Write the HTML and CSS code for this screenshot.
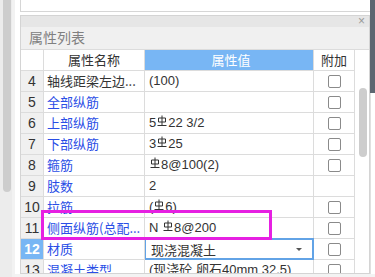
FILE: index.html
```html
<!DOCTYPE html>
<html lang="zh-CN">
<head>
  <meta charset="UTF-8" />
  <title>属性列表</title>
  <link rel="stylesheet" href="styles.css">
</head>
<body>
  <div class="screen">
    <div class="left-strip"><div class="left-thumb"></div></div>

    <div class="main">
      <div class="top-box"></div>

      <div class="panel">
        <div class="title-bar"><span class="close">×</span></div>
        <div class="panel-head">属性列表</div>

        <div class="panel-body">
          <div class="grid">
            <div class="row head">
              <div class="c num"></div>
              <div class="c name center">属性名称</div>
              <div class="c val center hl">属性值</div>
              <div class="c extra center">附加</div>
            </div>
            <div class="row">
              <div class="c num">4</div>
              <div class="c name black">轴线距梁左边...</div>
              <div class="c val">(100)</div>
              <div class="c extra"><span class="box"></span></div>
            </div>
            <div class="row">
              <div class="c num">5</div>
              <div class="c name">全部纵筋</div>
              <div class="c val"></div>
              <div class="c extra"><span class="box"></span></div>
            </div>
            <div class="row">
              <div class="c num">6</div>
              <div class="c name">上部纵筋</div>
              <div class="c val">5<svg class="steel" viewBox="0 0 10 12"><path d="M5 0.5V10M1.5 3H8.5V7H1.5ZM0.5 10.5H9.5"/></svg>22 3/2</div>
              <div class="c extra"><span class="box"></span></div>
            </div>
            <div class="row">
              <div class="c num">7</div>
              <div class="c name">下部纵筋</div>
              <div class="c val">3<svg class="steel" viewBox="0 0 10 12"><path d="M5 0.5V10M1.5 3H8.5V7H1.5ZM0.5 10.5H9.5"/></svg>25</div>
              <div class="c extra"><span class="box"></span></div>
            </div>
            <div class="row">
              <div class="c num">8</div>
              <div class="c name">箍筋</div>
              <div class="c val"><svg class="steel" viewBox="0 0 10 12"><path d="M5 0.5V10M1.5 3H8.5V7H1.5ZM0.5 10.5H9.5"/></svg>8@100(2)</div>
              <div class="c extra"><span class="box"></span></div>
            </div>
            <div class="row">
              <div class="c num">9</div>
              <div class="c name">肢数</div>
              <div class="c val">2</div>
              <div class="c extra"></div>
            </div>
            <div class="row">
              <div class="c num">10</div>
              <div class="c name">拉筋</div>
              <div class="c val">(<svg class="steel" viewBox="0 0 10 12"><path d="M5 0.5V10M1.5 3H8.5V7H1.5ZM0.5 10.5H9.5"/></svg>6)</div>
              <div class="c extra"><span class="box"></span></div>
            </div>
            <div class="row">
              <div class="c num">11</div>
              <div class="c name">侧面纵筋(总配...</div>
              <div class="c val">N <svg class="steel" viewBox="0 0 10 12"><path d="M5 0.5V10M1.5 3H8.5V7H1.5ZM0.5 10.5H9.5"/></svg>8@200</div>
              <div class="c extra"><span class="box"></span></div>
            </div>
            <div class="row">
              <div class="c num sel">12</div>
              <div class="c name">材质</div>
              <div class="c val select"><span>现浇混凝土</span><span class="caret"></span></div>
              <div class="c extra"><span class="box"></span></div>
            </div>
            <div class="row">
              <div class="c num">13</div>
              <div class="c name">混凝土类型</div>
              <div class="c val">(现浇砼 卵石40mm 32.5)</div>
              <div class="c extra"><span class="box"></span></div>
            </div>
          </div>

          <div class="vscroll"><div class="vthumb"></div></div>
        </div>
      </div>
    </div>

    <div class="right-strip"><div class="dark-bar"></div></div>

    <div class="mark"></div>
  </div>
</body>
</html>
```

FILE: styles.css
```css
body {
  margin: 0;
  padding: 0;
  background-color: #f3f3f3;
  font-family: "Liberation Sans", "Noto Sans CJK SC", sans-serif;
  font-size: 13px;
  color: #333;
}

.screen {
  width: 375px;
  height: 277px;
  display: flex;
  position: relative;
  overflow: hidden;
}

.left-strip {
  width: 15px;
  flex-shrink: 0;
  background-color: #ececec;
  border-right: 3px solid #f2f2f2;
  box-sizing: border-box;
  padding-left: 3px;
}

.left-thumb {
  width: 8px;
  height: 192px;
  background-color: #cdcdcd;
  border-radius: 0 0 4px 4px;
}

.main {
  width: 355px;
  flex-shrink: 0;
  background-color: #fff;
  padding-left: 5px;
  box-sizing: border-box;
  height: 274px;
}

.top-box {
  height: 12px;
  border-left: 1px solid #d6d6d6;
  border-bottom: 1px solid #d6d6d6;
  box-sizing: border-box;
  margin-bottom: 3px;
}

.panel {
  border: 1px solid #d4d4d4;
  height: 259px;
  box-sizing: border-box;
  display: flex;
  flex-direction: column;
  overflow: hidden;
}

.title-bar {
  height: 11px;
  background-color: #e6e6e6;
  position: relative;
  flex-shrink: 0;
}

.close {
  position: absolute;
  right: 4px;
  top: 0;
  font-size: 12px;
  line-height: 11px;
  color: #999;
}

.panel-head {
  height: 23px;
  background-color: #f0f0f0;
  border-bottom: 1px solid #dcdcdc;
  box-sizing: border-box;
  padding-left: 8px;
  line-height: 21px;
  font-size: 14px;
  color: #808080;
  font-family: "Noto Sans CJK SC", sans-serif;
  flex-shrink: 0;
}

.panel-body {
  display: flex;
  flex: 1;
  overflow: hidden;
}

.grid {
  width: 334px;
  flex-shrink: 0;
  border-right: 1px solid #dcdcdc;
  box-sizing: border-box;
}

.row {
  display: grid;
  grid-template-columns: 23px 101px 169px 40px;
  height: 21px;
}

.c {
  border-right: 1px solid #dcdcdc;
  border-bottom: 1px solid #dcdcdc;
  box-sizing: border-box;
  line-height: 20px;
  white-space: nowrap;
  overflow: hidden;
}

.c.extra {
  border-right: none;
  display: flex;
  align-items: center;
  justify-content: center;
}

.num {
  background-color: #f0f0f0;
  text-align: center;
  font-size: 14px;
  color: #333;
}

.head .num {
  background-color: #fff;
}

.num.sel {
  background-color: #78b6f4;
  color: #fff;
  font-weight: bold;
}

.name {
  padding-left: 3px;
  color: #2a4ee6;
  font-family: "Noto Sans CJK SC", sans-serif;
}

.name.black,
.head .name {
  color: #333;
}

.center {
  text-align: center;
  padding-left: 0;
}

.val {
  padding-left: 4px;
}

.head .val,
.head .extra {
  font-family: "Noto Sans CJK SC", sans-serif;
}

.val.hl {
  background-color: #78b6f4;
  color: #fff;
}

.val.select {
  border: 2px solid #62a3e6;
  border-left-width: 1px;
  display: flex;
  align-items: center;
  justify-content: space-between;
  padding-left: 5px;
  padding-right: 10px;
  line-height: 17px;
  font-family: "Noto Sans CJK SC", sans-serif;
  margin-top: -1px;
  height: 22px;
}

.caret {
  width: 0;
  height: 0;
  border-left: 3px solid transparent;
  border-right: 3px solid transparent;
  border-top: 3px solid #555;
}

.box {
  width: 13px;
  height: 13px;
  border: 1px solid #8a8a8a;
  border-radius: 2px;
  box-sizing: border-box;
  background-color: #fff;
}

.steel {
  width: 10px;
  height: 12px;
  vertical-align: 0;
  margin: 0 1px;
  fill: none;
  stroke: #333;
  stroke-width: 1;
}

.vscroll {
  flex: 1;
  background-color: #fff;
  padding: 38px 0 0 4px;
}

.vthumb {
  width: 8px;
  height: 69px;
  background-color: #cdcdcd;
  border-radius: 4px;
}

.right-strip {
  width: 5px;
  flex-shrink: 0;
  background-color: #fff;
  border-left: 1px solid #e0e0e0;
  box-sizing: border-box;
  height: 274px;
}

.dark-bar {
  height: 93px;
  background-color: #5d6671;
  margin-left: -1px;
}

.mark {
  position: absolute;
  left: 41px;
  top: 210px;
  width: 231px;
  height: 30px;
  border: 3px solid #e620e2;
  box-sizing: border-box;
}
```
